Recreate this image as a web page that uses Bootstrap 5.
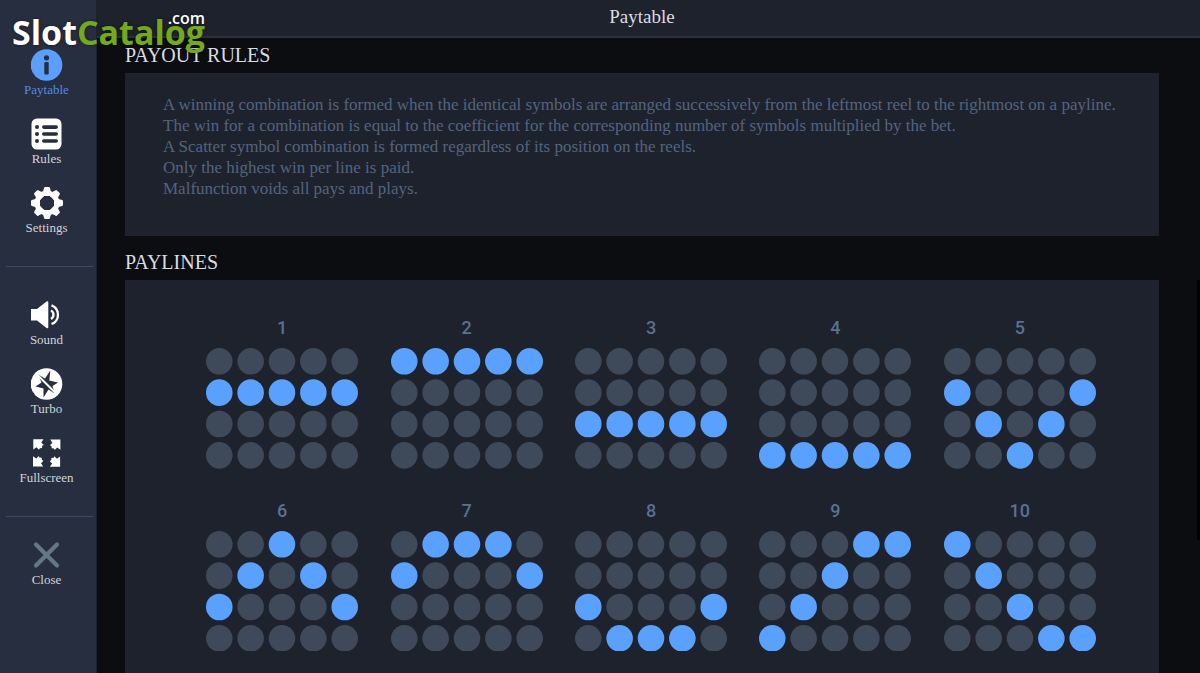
<!DOCTYPE html>
<html lang="en">
<head>
<meta charset="utf-8">
<meta name="viewport" content="width=device-width, initial-scale=1">
<title>Paytable</title>
<link href="https://cdn.jsdelivr.net/npm/bootstrap@5.3.0/dist/css/bootstrap.min.css" rel="stylesheet">
<style>
  body { background: #0b0d10; color: #d9dce0; font-family: "Liberation Serif", "Times New Roman", serif; }
  .side-menu { width: 97px; background: #272e3f; border-right: 1px solid #1d2431; padding: 49px 3px 0 6px; }
  .menu-group { display: grid; gap: 19px; }
  .menu-btn { background: none; border: 0; padding: 0 6px 0 0; color: #d0d4db; font-size: 13px; line-height: 18px; text-align: center; }
  .menu-btn svg { display: block; width: 32px; height: 32px; margin: 0 auto; color: #fff; }
  .menu-btn.current { color: #4f8ce0; }
  .menu-btn.current svg { color: #5a9fff; }
  .menu-btn.dismiss svg { color: #647883; }
  .menu-rule { border: 0; border-top: 1px solid #41485c; opacity: 1; margin: 29px 0 32px; }
  .menu-rule.tight { margin-bottom: 22px; }
  .top-bar { background: #1e222d; border-bottom: 2px solid #29323d; padding: 4px 41px 7px 28px; }
  .top-bar h1 { font-size: 19px; line-height: 25px; }
  .scroll-area { overflow-y: auto; scrollbar-width: none; padding: 5px 41px 0 28px; }
  .scroll-area::-webkit-scrollbar { display: none; }
  .section-title { font-size: 20px; line-height: 24px; margin: 0 0 6px; }
  .panel { background: #1e222c; }
  .rules-text { color: #536480; font-size: 17px; line-height: 21px; padding: 21px 38px 37px; margin-bottom: 14px; }
  .rules-text p { margin: 0; }
  .lines-grid { display: grid; grid-template-columns: repeat(5, 1fr); row-gap: 30px; padding: 36px 47px 40px 65px; }
  .line-name { color: #5a7190; font: 500 18px/24px Roboto, sans-serif; text-align: center; }
  .line-dots { display: block; width: 152px; margin: 8px auto 0; fill: #3e4a5a; }
  .line-dots .hit { fill: #5aa0ff; }
  .brand { position: absolute; left: 12px; top: 8px; font: 700 34px/48px "Open Sans", "Noto Sans", sans-serif; color: #fff; text-decoration: none; text-shadow: 0 0 3px #0008; }
  .brand .leaf { color: #74a81f; }
  .brand .tld { position: absolute; right: 0; top: 0; font-size: 16px; line-height: 20px; font-weight: 600; }
  .scroll-thumb { position: absolute; right: 0; top: 280px; width: 3px; height: 260px; background: #000; }
</style>
</head>
<body>
<div class="d-flex vh-100 overflow-hidden position-relative">
  <nav class="side-menu flex-shrink-0" aria-label="Game menu">
    <div class="menu-group">
      <button type="button" class="menu-btn current">
        <svg viewBox="0 0 32 32"><circle cx="15.500" cy="16" r="15.800" fill="currentColor"/><g fill="#272e3f"><circle cx="15.500" cy="8.800" r="2.600"/><rect x="13.300" y="13" width="4.400" height="12.500" rx="1"/></g></svg>
        Paytable</button>
      <button type="button" class="menu-btn">
        <svg viewBox="0 0 32 32"><rect x="0.500" y="0.500" width="30" height="31" rx="5.500" fill="currentColor"/><g fill="#272e3f"><circle cx="6" cy="9" r="2"/><circle cx="6" cy="16" r="2"/><circle cx="6" cy="23" r="2"/><rect x="11" y="7.300" width="16" height="3.600" rx="1.800"/><rect x="11" y="14.200" width="16" height="3.600" rx="1.800"/><rect x="11" y="21.200" width="16" height="3.600" rx="1.800"/></g></svg>
        Rules</button>
      <button type="button" class="menu-btn">
        <svg viewBox="0 0 32 32"><g fill="currentColor"><path id="cog" d="M11.800 5.500 13.100 0.800Q13.300 0 14.200 0H17.800Q18.700 0 18.900 0.800L20.200 5.500V9H11.800Z"/><use href="#cog" transform="rotate(45 16 16)"/><use href="#cog" transform="rotate(90 16 16)"/><use href="#cog" transform="rotate(135 16 16)"/><use href="#cog" transform="rotate(180 16 16)"/><use href="#cog" transform="rotate(225 16 16)"/><use href="#cog" transform="rotate(270 16 16)"/><use href="#cog" transform="rotate(315 16 16)"/></g><circle cx="16" cy="16" r="10" fill="none" stroke="currentColor" stroke-width="5"/></svg>
        Settings</button>
    </div>
    <hr class="menu-rule">
    <div class="menu-group">
      <button type="button" class="menu-btn">
        <svg viewBox="0 0 32 32"><path fill="currentColor" d="M0 10H6L15.500 2.500Q17.300 1.500 17.300 3.500V28Q17.300 30 15.500 29L6 21.500H0Z"/><path d="M20 11.500A4.800 4.800 0 0 1 20 19.900M20.500 6.300A10 10 0 0 1 20.500 25" fill="none" stroke="currentColor" stroke-width="2.300"/></svg>
        Sound</button>
      <button type="button" class="menu-btn">
        <svg viewBox="0 0 32 32"><circle cx="15.500" cy="16" r="15.800" fill="currentColor"/><path fill="#272e3f" d="M19.300 2.500 18.300 12.500 27 14.500 21.500 18 23.500 25.500 17.500 21.500 12.500 29.500 12.500 20.500 4.500 18.500 10.500 14.500 7 6.500 14 10.500Z"/><path d="M6 6.500 25 25.500" stroke="currentColor" stroke-width="2"/></svg>
        Turbo</button>
      <button type="button" class="menu-btn">
        <svg viewBox="0 0 32 32"><g fill="currentColor"><path id="corner" d="M2.300 2.300H12.500L10.300 5.500 12.800 8 11.200 8.800 11 11 8.800 11.200 8 12.800 5.500 10.300 2.300 12.500Z"/><use href="#corner" transform="rotate(90 15.700 16)"/><use href="#corner" transform="rotate(180 15.700 16)"/><use href="#corner" transform="rotate(270 15.700 16)"/></g></svg>
        Fullscreen</button>
    </div>
    <hr class="menu-rule tight">
    <div class="menu-group">
      <button type="button" class="menu-btn dismiss">
        <svg viewBox="0 0 32 32"><path d="M5 5.500 26 26.500M26 5.500 5 26.500" stroke="currentColor" stroke-width="4.200" stroke-linecap="round"/></svg>
        Close</button>
    </div>
  </nav>

  <div class="d-flex flex-column flex-grow-1 overflow-hidden">
    <header class="top-bar"><h1 class="text-center m-0 fw-normal">Paytable</h1></header>
    <main class="scroll-area flex-grow-1">
      <h2 class="section-title fw-normal">PAYOUT RULES</h2>
      <section class="panel rules-text">
        <p>A winning combination is formed when the identical symbols are arranged successively from the leftmost reel to the rightmost on a payline.</p>
        <p>The win for a combination is equal to the coefficient for the corresponding number of symbols multiplied by the bet.</p>
        <p>A Scatter symbol combination is formed regardless of its position on the reels.</p>
        <p>Only the highest win per line is paid.</p>
        <p>Malfunction voids all pays and plays.</p>
      </section>
      <h2 class="section-title fw-normal">PAYLINES</h2>
      <section class="panel lines-grid" id="paylines"></section>
    </main>
  </div>

  <a class="brand" href="#">Slot<span class="leaf">Catalog</span><span class="tld">.com</span></a>
  <div class="scroll-thumb"></div>
</div>
<script src="https://cdn.jsdelivr.net/npm/bootstrap@5.3.0/dist/js/bootstrap.bundle.min.js"></script>
<script>
  // Each payline lists the row (0 = top) that it crosses on each of the five reels.
  const paylines = ["11111", "00000", "22222", "33333", "12321", "21012", "10001", "23332", "32100", "01233"];
  document.getElementById("paylines").innerHTML = paylines.map((line, n) => {
    let dots = "";
    for (let row = 0; row < 4; row++)
      for (let reel = 0; reel < 5; reel++)
        dots += `<circle cx="${133 + reel * 314}" cy="${133 + row * 314}" r="133"${+line[reel] === row ? ' class="hit"' : ""}/>`;
    return `<div><div class="line-name">${n + 1}</div><svg class="line-dots" viewBox="0 0 1522 1208">${dots}</svg></div>`;
  }).join("");
</script>
</body>
</html>
